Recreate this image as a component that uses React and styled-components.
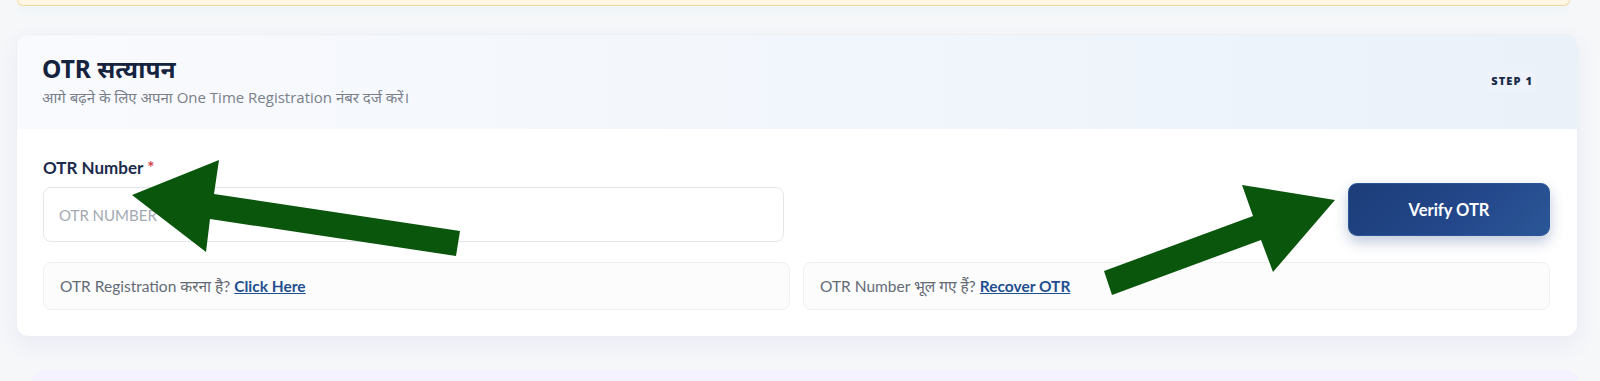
import styled, { createGlobalStyle } from "styled-components";

const GlobalStyle = createGlobalStyle`
  html, body {
    margin: 0;
    padding: 0;
    background: #f6f7f9;
  }
  * {
    box-sizing: border-box;
  }
`;

function App() {
  return (
    <Page>
      <GlobalStyle />
      <Notice />
      <Card>
        <CardHeader>
          <HeaderText>
            <Title>OTR सत्यापन</Title>
            <Subtitle>आगे बढ़ने के लिए अपना One Time Registration नंबर दर्ज करें।</Subtitle>
          </HeaderText>
          <Step>STEP 1</Step>
        </CardHeader>
        <CardBody>
          <Field>
            <Label>
              OTR Number <Required>*</Required>
            </Label>
            <Input placeholder="OTR NUMBER" />
          </Field>
          <VerifyButton>Verify OTR</VerifyButton>
          <InfoBox>
            OTR Registration करना है? <InfoLink href="#">Click Here</InfoLink>
          </InfoBox>
          <InfoBox>
            OTR Number भूल गए हैं? <InfoLink href="#">Recover OTR</InfoLink>
          </InfoBox>
        </CardBody>
      </Card>
      <NextSection />

      <Arrows viewBox="0 0 1600 381" width="1600" height="381">
        <polygon
          fill="#0b560d"
          points="132,195 219,160 214,194 460,231 456,256 210,219 206,252"
        />
        <polygon
          fill="#0b560d"
          points="1335,200 1273,272 1261,240 1112,295 1104,271 1253,216 1242,185"
        />
      </Arrows>
    </Page>
  );
}

const Page = styled.div`
  position: relative;
  width: 1600px;
  height: 381px;
  overflow: hidden;
  padding: 0 22px 0 16px;
  font-family: "Lato", "Noto Sans", sans-serif;
`;

const Notice = styled.div`
  height: 6px;
  margin: 0 8px 0 1px;
  background: #fff6e6;
  border: 1.5px solid #f2d6a2;
  border-top: none;
  border-radius: 0 0 10px 10px;
  box-shadow: 0 5px 8px rgba(160, 230, 230, 0.12);
`;

const Card = styled.div`
  margin-top: 28px;
  background: #ffffff;
  border: 1px solid #eceff4;
  border-radius: 12px;
  overflow: hidden;
  box-shadow: 0 8px 22px rgba(90, 90, 200, 0.07);
`;

const CardHeader = styled.div`
  display: flex;
  align-items: center;
  justify-content: space-between;
  height: 94px;
  padding: 0 41px 4px 25px;
  background: linear-gradient(90deg, #f9fafd 0%, #f1f6fc 55%, #eaf1f9 100%);
`;

const HeaderText = styled.div`
  display: flex;
  flex-direction: column;
`;

const Title = styled.h2`
  margin: 0;
  font-family: "Noto Sans", sans-serif;
  font-size: 24.5px;
  line-height: 30px;
  font-weight: 700;
  color: #15233f;
`;

const Subtitle = styled.span`
  margin-top: 3px;
  font-family: "Open Sans", "Noto Sans", sans-serif;
  font-size: 15px;
  line-height: 20px;
  color: #7a808a;
`;

const Step = styled.span`
  padding: 2px 3px;
  font-family: "Open Sans", sans-serif;
  font-size: 11px;
  font-weight: 800;
  letter-spacing: 1.1px;
  color: #1b2a48;
  background: #eef3fb;
`;

const CardBody = styled.div`
  display: grid;
  grid-template-columns: 1fr 1fr;
  column-gap: 13px;
  row-gap: 20px;
  padding: 29px 27px 26px 26px;
`;

const Field = styled.div`
  display: flex;
  flex-direction: column;
  padding-right: 6px;
`;

const Label = styled.label`
  margin-bottom: 9px;
  font-size: 17px;
  line-height: 20px;
  font-weight: 700;
  color: #1c2b4b;
`;

const Required = styled.span`
  color: #d64550;
`;

const Input = styled.input`
  height: 55px;
  padding: 0 15px;
  border: 1px solid #e3e6eb;
  border-radius: 8px;
  font-family: "Lato", sans-serif;
  font-size: 15px;
  color: #1c2b4b;
  outline: none;
  &::placeholder {
    color: #a3a9b3;
  }
`;

const VerifyButton = styled.button`
  justify-self: end;
  align-self: end;
  width: 202px;
  height: 53px;
  margin-bottom: 6px;
  border: 1px solid #2b5596;
  border-radius: 9px;
  font-family: "Lato", sans-serif;
  font-size: 16.5px;
  font-weight: 700;
  color: #ffffff;
  background: linear-gradient(135deg, #1c3d78 0%, #23478a 55%, #2b5797 100%);
  box-shadow: 0 6px 14px rgba(30, 63, 124, 0.28);
  cursor: pointer;
`;

const InfoBox = styled.div`
  height: 48px;
  display: flex;
  align-items: center;
  gap: 4px;
  padding: 0 16px;
  background: #fcfcfd;
  border: 1px solid #eef0f3;
  border-radius: 8px;
  font-size: 15.5px;
  color: #646b76;
`;

const InfoLink = styled.a`
  font-weight: 700;
  color: #1f4f8f;
  text-decoration: underline;
`;

const NextSection = styled.div`
  margin: 33px 0 0 16px;
  height: 40px;
  background: #f4f2fd;
  border-radius: 12px 12px 0 0;
`;

const Arrows = styled.svg`
  position: absolute;
  top: 0;
  left: 0;
  pointer-events: none;
`;

export default App;
